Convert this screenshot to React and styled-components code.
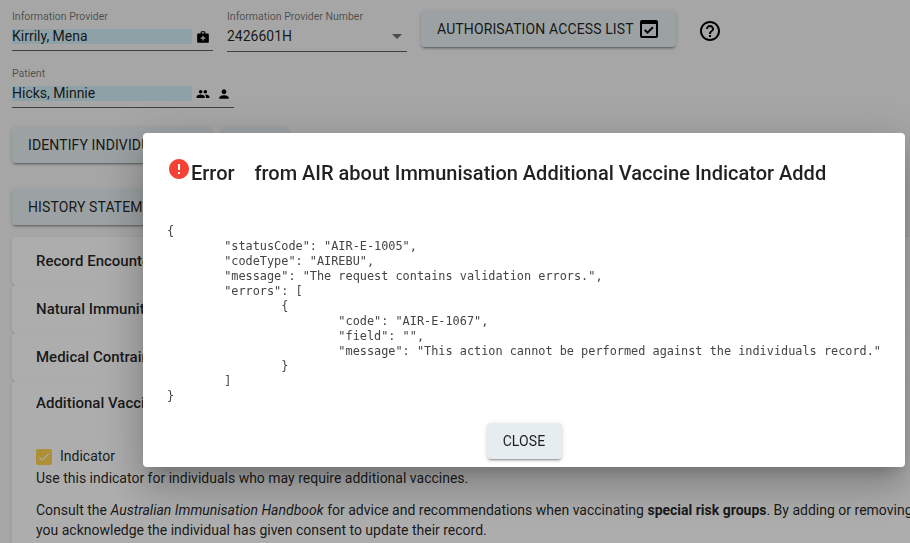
import styled, { createGlobalStyle } from "styled-components";

const GlobalStyle = createGlobalStyle`
  html, body {
    margin: 0;
    height: 100%;
    overflow: hidden;
    background: #f5f5f5;
    font-family: Roboto, "Liberation Sans", sans-serif;
    color: rgba(0, 0, 0, 0.87);
  }
`;

const Page = styled.div`
  width: 910px;
  height: 543px;
  overflow: hidden;
  box-sizing: border-box;
  padding: 10px 0 0 12px;
`;

const FieldRow = styled.div`
  display: flex;
  align-items: flex-start;
  height: ${(props) => props.height}px;
`;

const Field = styled.div`
  width: ${(props) => props.width}px;
  margin-right: ${(props) => props.gap || 0}px;
  height: ${(props) => props.height || 40}px;
  border-bottom: 1px solid rgba(0, 0, 0, 0.62);
  display: flex;
  flex-direction: column;
`;

const Label = styled.label`
  font-size: 10.5px;
  line-height: 12px;
  color: rgba(0, 0, 0, 0.54);
  margin: 1px 0 6px;
`;

const ValueRow = styled.div`
  display: flex;
  align-items: center;
`;

const Highlight = styled.span`
  width: 180px;
  height: 15px;
  line-height: 15px;
  font-size: 14px;
  background: #d2eef5;
  margin-right: 4px;
  white-space: nowrap;
`;

const SelectValue = styled.span`
  flex: 1;
  height: 15px;
  line-height: 15px;
  font-size: 14px;
`;

const Caret = styled.span`
  width: 0;
  height: 0;
  margin-right: 5px;
  border-left: 5px solid transparent;
  border-right: 5px solid transparent;
  border-top: 5px solid rgba(0, 0, 0, 0.54);
`;

const SmallIcon = styled.svg`
  width: 14px;
  height: 14px;
  margin-right: ${(props) => props.gap || 0}px;
  fill: #000;
  flex: none;
`;

const Button = styled.button`
  height: 36px;
  width: ${(props) => (props.width ? `${props.width}px` : "auto")};
  margin-top: ${(props) => props.top || 0}px;
  box-sizing: border-box;
  padding: 0 16px;
  display: flex;
  align-items: center;
  justify-content: ${(props) => props.justify || "center"};
  gap: 3px;
  border: none;
  border-radius: 4px;
  background: #e6edf0;
  color: rgba(0, 0, 0, 0.87);
  font-family: inherit;
  font-size: 14px;
  font-weight: 400;
  letter-spacing: 0.12px;
  white-space: nowrap;
  flex: none;
  box-shadow: 0 3px 1px -2px rgba(0, 0, 0, 0.2), 0 2px 2px 0 rgba(0, 0, 0, 0.14),
    0 1px 5px 0 rgba(0, 0, 0, 0.12);

  svg {
    flex: none;
    width: 24px;
    height: 24px;
    fill: #000;
  }
`;

const HelpIcon = styled.svg`
  width: 24px;
  height: 24px;
  margin: 9px 0 0 22px;
  fill: #000;
`;

const ButtonRow = styled.div`
  display: flex;
  gap: 11px;
  margin-bottom: ${(props) => props.bottom}px;
`;

const Card = styled.div`
  width: 960px;
  background: #fff;
  border-radius: 4px;
  box-shadow: 0 1px 1px -1px rgba(0, 0, 0, 0.2), 0 1px 1px 0 rgba(0, 0, 0, 0.08),
    0 1px 3px 0 rgba(0, 0, 0, 0.1);
`;

const CardHead = styled.div`
  height: ${(props) => props.height || 48}px;
  box-sizing: border-box;
  padding: 0 24px;
  display: flex;
  align-items: center;
  font-size: 15px;
  font-weight: 500;
`;

const CardBody = styled.div`
  padding: 24px 24px 40px;
  font-size: 14px;
  line-height: 20px;
`;

const CheckRow = styled.div`
  display: flex;
  align-items: flex-start;
  gap: 8px;
  height: 16px;
  margin-bottom: 3px;
`;

const CheckLabel = styled.span`
  line-height: 14px;
`;

const CheckBox = styled.span`
  width: 16px;
  height: 16px;
  border-radius: 2px;
  background: #ffd54f;
  display: flex;
  align-items: center;
  justify-content: center;

  svg {
    width: 14px;
    height: 14px;
    fill: #fff;
  }
`;

const Paragraph = styled.p`
  margin: 0 0 ${(props) => props.bottom || 0}px;
  white-space: nowrap;
`;

const Backdrop = styled.div`
  position: fixed;
  inset: 0;
  background: rgba(0, 0, 0, 0.32);
`;

const Dialog = styled.div`
  position: fixed;
  left: 143px;
  top: 133px;
  width: 762px;
  height: 334px;
  box-sizing: border-box;
  padding: 24px 24px 0;
  background: #fff;
  border-radius: 4px;
  display: flex;
  flex-direction: column;
  box-shadow: 0 11px 15px -7px rgba(0, 0, 0, 0.2), 0 24px 38px 3px rgba(0, 0, 0, 0.14),
    0 9px 46px 8px rgba(0, 0, 0, 0.12);
`;

const DialogTitle = styled.h2`
  margin: 0 0 37px;
  display: flex;
  align-items: flex-start;
  height: 30px;
  font-size: 20px;
  font-weight: 500;
  line-height: 32px;
  white-space: pre;

  svg {
    width: 24px;
    height: 24px;
    fill: #f44336;
    flex: none;
  }
`;

const Code = styled.pre`
  margin: 0;
  font-family: "DejaVu Sans Mono", monospace;
  font-size: 11.87px;
  line-height: 15px;
  tab-size: 8;
  color: #444;
  height: 180px;
`;

const DialogActions = styled.div`
  margin-top: 19px;
  display: flex;
  justify-content: center;
`;

const errorText = `{
\t"statusCode": "AIR-E-1005",
\t"codeType": "AIREBU",
\t"message": "The request contains validation errors.",
\t"errors": [
\t\t{
\t\t\t"code": "AIR-E-1067",
\t\t\t"field": "",
\t\t\t"message": "This action cannot be performed against the individuals record."
\t\t}
\t]
}`;

export default function App() {
  return (
    <>
      <GlobalStyle />
      <Page>
        <FieldRow height={57}>
          <Field width={201} gap={14}>
            <Label>Information Provider</Label>
            <ValueRow>
              <Highlight>Kirrily, Mena</Highlight>
              <SmallIcon viewBox="0 0 24 24">
                <path d="M20 6h-4V4c0-1.1-.9-2-2-2h-4c-1.1 0-2 .9-2 2v2H4c-1.1 0-2 .9-2 2v12c0 1.1.9 2 2 2h16c1.1 0 2-.9 2-2V8c0-1.1-.9-2-2-2zM10 4h4v2h-4V4zm6 11h-3v3h-2v-3H8v-2h3v-3h2v3h3v2z" />
              </SmallIcon>
            </ValueRow>
          </Field>
          <Field width={180} gap={14} height={41}>
            <Label>Information Provider Number</Label>
            <ValueRow>
              <SelectValue>2426601H</SelectValue>
              <Caret />
            </ValueRow>
          </Field>
          <Button width={255} top={1} justify="flex-start">
            AUTHORISATION ACCESS LIST
            <svg viewBox="0 0 24 24">
              <path d="M19 3H5a2 2 0 0 0-2 2v14a2 2 0 0 0 2 2h14a2 2 0 0 0 2-2V5a2 2 0 0 0-2-2zm0 16H5V7h14v12zm-2.4-8-1.4-1.4-4.7 4.7-2.1-2.1L7 13.6l3.5 3.5z" />
            </svg>
          </Button>
          <HelpIcon viewBox="0 0 24 24">
            <path d="M11 18h2v-2h-2v2zm1-16C6.48 2 2 6.48 2 12s4.48 10 10 10 10-4.48 10-10S17.52 2 12 2zm0 18c-4.41 0-8-3.59-8-8s3.59-8 8-8 8 3.59 8 8-3.59 8-8 8zm0-14c-2.21 0-4 1.79-4 4h2c0-1.1.9-2 2-2s2 .9 2 2c0 2-3 1.75-3 5h2c0-2.25 3-2.5 3-5 0-2.21-1.79-4-4-4z" />
          </HelpIcon>
        </FieldRow>
        <FieldRow height={60}>
          <Field width={222}>
            <Label>Patient</Label>
            <ValueRow>
              <Highlight>Hicks, Minnie</Highlight>
              <SmallIcon viewBox="0 0 24 24" gap={7}>
                <path d="M16 11c1.66 0 2.99-1.34 2.99-3S17.66 5 16 5c-1.66 0-3 1.34-3 3s1.34 3 3 3zm-8 0c1.66 0 2.99-1.34 2.99-3S9.66 5 8 5C6.34 5 5 6.34 5 8s1.34 3 3 3zm0 2c-2.33 0-7 1.17-7 3.5V19h14v-2.5c0-2.33-4.67-3.5-7-3.5zm8 0c-.29 0-.62.02-.97.05 1.16.84 1.97 1.97 1.97 3.45V19h6v-2.5c0-2.33-4.67-3.5-7-3.5z" />
              </SmallIcon>
              <SmallIcon viewBox="0 0 24 24">
                <path d="M12 12c2.21 0 4-1.79 4-4s-1.79-4-4-4-4 1.79-4 4 1.79 4 4 4zm0 2c-2.67 0-8 1.34-8 4v2h16v-2c0-2.66-5.33-4-8-4z" />
              </SmallIcon>
            </ValueRow>
          </Field>
        </FieldRow>
        <ButtonRow bottom={26}>
          <Button width={199} justify="flex-start">IDENTIFY INDIVIDUAL</Button>
          <Button width={66}>EDIT</Button>
        </ButtonRow>
        <ButtonRow bottom={12}>
          <Button width={199} justify="flex-start">HISTORY STATEMENT</Button>
        </ButtonRow>
        <Card>
          <CardHead>Record Encounter</CardHead>
        </Card>
        <Card>
          <CardHead>Natural Immunity</CardHead>
        </Card>
        <Card>
          <CardHead>Medical Contraindication</CardHead>
        </Card>
        <Card>
          <CardHead height={44}>Additional Vaccine Indicator</CardHead>
          <CardBody>
            <CheckRow>
              <CheckBox>
                <svg viewBox="0 0 24 24">
                  <path d="M9 16.2 4.8 12l-1.4 1.4L9 19 21 7l-1.4-1.4z" />
                </svg>
              </CheckBox>
              <CheckLabel>Indicator</CheckLabel>
            </CheckRow>
            <Paragraph bottom={12}>Use this indicator for individuals who may require additional vaccines.</Paragraph>
            <Paragraph>
              Consult the <em>Australian Immunisation Handbook</em> for advice and recommendations when vaccinating{" "}
              <strong>special risk groups</strong>. By adding or removing
            </Paragraph>
            <Paragraph>you acknowledge the individual has given consent to update their record.</Paragraph>
          </CardBody>
        </Card>
      </Page>
      <Backdrop />
      <Dialog>
        <DialogTitle>
          <svg viewBox="0 0 24 24">
            <path d="M12 2C6.48 2 2 6.48 2 12s4.48 10 10 10 10-4.48 10-10S17.52 2 12 2zm1 15h-2v-2h2v2zm0-4h-2V7h2v6z" />
          </svg>
          {"Error\u00a0\u00a0\u00a0\u00a0from AIR about Immunisation Additional Vaccine Indicator Addd"}
        </DialogTitle>
        <Code>{errorText}</Code>
        <DialogActions>
          <Button width={75}>CLOSE</Button>
        </DialogActions>
      </Dialog>
    </>
  );
}
